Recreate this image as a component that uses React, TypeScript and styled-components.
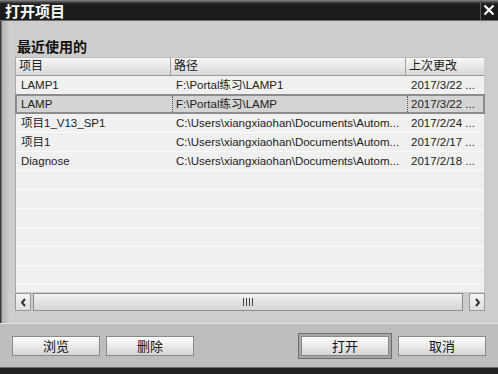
import styled, { createGlobalStyle } from 'styled-components';

const GlobalStyle = createGlobalStyle`
  html, body {
    margin: 0;
    padding: 0;
    background: #1c1c1c;
  }
  body {
    font-family: "Liberation Sans", "Noto Sans CJK SC", sans-serif;
  }
`;

interface Project {
  name: string;
  path: string;
  changed: string;
}

const projects: Project[] = [
  { name: 'LAMP1', path: 'F:\\Portal练习\\LAMP1', changed: '2017/3/22 ...' },
  { name: 'LAMP', path: 'F:\\Portal练习\\LAMP', changed: '2017/3/22 ...' },
  { name: '项目1_V13_SP1', path: 'C:\\Users\\xiangxiaohan\\Documents\\Autom...', changed: '2017/2/24 ...' },
  { name: '项目1', path: 'C:\\Users\\xiangxiaohan\\Documents\\Autom...', changed: '2017/2/17 ...' },
  { name: 'Diagnose', path: 'C:\\Users\\xiangxiaohan\\Documents\\Autom...', changed: '2017/2/18 ...' },
];

const SELECTED = 1;

const App = () => {
  return (
    <>
      <GlobalStyle />
      <Window>
        <TitleBar>
          <Title>打开项目</Title>
          <CloseButton>
            <svg width="12" height="12" viewBox="0 0 12 12">
              <path d="M1.5 1.5 L10.5 10.5 M10.5 1.5 L1.5 10.5" stroke="#fff" strokeWidth="2.2" />
            </svg>
          </CloseButton>
        </TitleBar>

        <Content>
          <SectionTitle>最近使用的</SectionTitle>
          <Table>
            <HeaderRow>
              <HeaderCell>项目</HeaderCell>
              <HeaderCell>路径</HeaderCell>
              <HeaderCell $last>上次更改</HeaderCell>
            </HeaderRow>
            {projects.map((p, i) => (
              <Row key={p.name} $selected={i === SELECTED}>
                <Cell $selected={i === SELECTED}>{p.name}</Cell>
                <Cell $selected={i === SELECTED} $focus={i === SELECTED}>{p.path}</Cell>
                <Cell $selected={i === SELECTED} $focus={i === SELECTED}>{p.changed}</Cell>
              </Row>
            ))}
            <Filler />
          </Table>
          <ScrollBar>
            <ScrollButton>
              <svg width="7" height="9" viewBox="0 0 7 9">
                <path d="M5 1 L2 4.5 L5 8" stroke="#333" strokeWidth="2" fill="none" />
              </svg>
            </ScrollButton>
            <Track>
              <Grip>
                <span />
                <span />
                <span />
                <span />
              </Grip>
            </Track>
            <ScrollButton>
              <svg width="7" height="9" viewBox="0 0 7 9">
                <path d="M2 1 L5 4.5 L2 8" stroke="#333" strokeWidth="2" fill="none" />
              </svg>
            </ScrollButton>
          </ScrollBar>
        </Content>

        <ButtonBar>
          <Button>浏览</Button>
          <Button>删除</Button>
          <Spacer />
          <DefaultRing>
            <Button>打开</Button>
          </DefaultRing>
          <Button>取消</Button>
        </ButtonBar>
        <BottomEdge />
      </Window>
    </>
  );
};

const Window = styled.div`
  width: 498px;
  height: 374px;
  display: flex;
  flex-direction: column;
  overflow: hidden;
  background: #cbcbcb;
`;

const TitleBar = styled.div`
  height: 21px;
  flex: none;
  display: flex;
  align-items: center;
  justify-content: space-between;
  background: linear-gradient(to bottom, #8c8c8c 0px, #4a4a4a 2px, #1e1e1e 4px, #1a1a1a 100%);
  border-bottom: 1px solid #6a6a6a;
  box-sizing: border-box;
`;

const Title = styled.div`
  color: #ffffff;
  font-family: "Noto Sans CJK SC", sans-serif;
  font-weight: 700;
  font-size: 15px;
  line-height: 18px;
  padding-left: 5px;
  padding-top: 1px;
`;

const CloseButton = styled.div`
  width: 16px;
  height: 20px;
  display: flex;
  align-items: center;
  justify-content: center;
  border-left: 1px solid #5a5a5a;
  margin-right: 1px;
`;

const Content = styled.div`
  flex: 1;
  display: flex;
  flex-direction: column;
  padding: 16px 13px 12px 15px;
  background:
    linear-gradient(to right, #3a3a3a 0px, #3a3a3a 1px, #b4b4b4 2px, #cfcfcf 10px, #cdcdcd 15px) left / 15px 100% no-repeat,
    #cdcdcd;
  border-bottom: 1px solid #e2e2e2;
`;

const SectionTitle = styled.div`
  font-family: "Noto Sans CJK SC", sans-serif;
  font-weight: 700;
  font-size: 14px;
  line-height: 18px;
  height: 18px;
  color: #111;
  padding-left: 2px;
  margin-bottom: 2px;
`;

const Table = styled.div`
  flex: 1;
  display: flex;
  flex-direction: column;
  background: #f0f0f0;
  border-left: 1px solid #a8a8a8;
  border-right: 1px solid #c8c8c8;
`;

const columns = '155px 235px 1fr';

const HeaderRow = styled.div`
  display: grid;
  grid-template-columns: ${columns};
  height: 19px;
  box-sizing: border-box;
  background: linear-gradient(to bottom, #f7f7f7, #e6e6e6 55%, #d9d9d9);
  border-top: 1px solid #bdbdbd;
  border-bottom: 1px solid #9a9a9a;
`;

const HeaderCell = styled.div<{ $last?: boolean }>`
  font-size: 12px;
  line-height: 17px;
  color: #1a1a1a;
  padding-left: 3px;
  border-right: ${(p) => (p.$last ? 'none' : '1px solid #a0a0a0')};
`;

const Row = styled.div<{ $selected?: boolean }>`
  display: grid;
  grid-template-columns: ${columns};
  height: ${(p) => (p.$selected ? '20px' : '19px')};
  box-sizing: border-box;
  background: ${(p) => (p.$selected ? '#d4d4d4' : '#f0f0f0')};
  border: ${(p) => (p.$selected ? '2px solid #8c8c8c' : 'none')};
  border-bottom: ${(p) => (p.$selected ? '2px solid #8c8c8c' : '1px solid #fafafa')};
  margin: ${(p) => (p.$selected ? '-1px -1px 0' : '0')};
  padding-left: ${(p) => (p.$selected ? '0' : '1px')};
`;

const Cell = styled.div<{ $focus?: boolean; $selected?: boolean }>`
  font-size: 11.5px;
  line-height: ${(p) => (p.$selected ? '16px' : '18px')};
  color: #222;
  padding: 0 1px 0 3px;
  white-space: nowrap;
  overflow: hidden;
  text-overflow: clip;
  border-left: ${(p) => (p.$focus ? '1px dotted #555' : '1px solid transparent')};
`;

const Filler = styled.div`
  flex: 1;
  background: repeating-linear-gradient(
    to bottom,
    #f0f0f0 0px,
    #f0f0f0 18px,
    #fafafa 18px,
    #fafafa 19px
  );
`;

const ScrollBar = styled.div`
  display: flex;
  align-items: stretch;
  gap: 2px;
  height: 18px;
  margin-top: 1px;
`;

const ScrollButton = styled.div`
  width: 16px;
  box-sizing: border-box;
  border: 1px solid #9a9a9a;
  background: linear-gradient(to bottom, #f4f4f4, #dedede);
  display: flex;
  align-items: center;
  justify-content: center;
  &:last-child {
    margin-left: 4px;
  }
`;

const Track = styled.div`
  flex: 1;
  box-sizing: border-box;
  border: 1px solid #8e8e8e;
  background: linear-gradient(to bottom, #f2f2f2, #e0e0e0 60%, #d6d6d6);
  display: flex;
  align-items: center;
  justify-content: center;
`;

const Grip = styled.div`
  display: flex;
  gap: 2px;
  span {
    width: 1px;
    height: 8px;
    background: #444;
  }
`;

const ButtonBar = styled.div`
  height: 43px;
  flex: none;
  display: flex;
  align-items: center;
  gap: 6px;
  padding: 0 12px 0 12px;
  box-sizing: border-box;
  background: #bdbdbd;
`;

const Spacer = styled.div`
  flex: 1;
`;

const DefaultRing = styled.div`
  padding: 2px;
  border: 1px solid #6e6e6e;
  background: #a6a6a6;
  display: flex;
`;

const Button = styled.div`
  width: 88px;
  height: 20px;
  box-sizing: border-box;
  border: 1px solid #8a8a8a;
  background: linear-gradient(to bottom, #fbfbfb, #ececec 45%, #d4d4d4);
  font-family: "Noto Sans CJK SC", sans-serif;
  font-size: 13px;
  line-height: 18px;
  text-align: center;
  color: #111;
`;

const BottomEdge = styled.div`
  height: 6px;
  flex: none;
  background: #222;
  border-top: 1px solid #6a6a6a;
`;

export default App;
